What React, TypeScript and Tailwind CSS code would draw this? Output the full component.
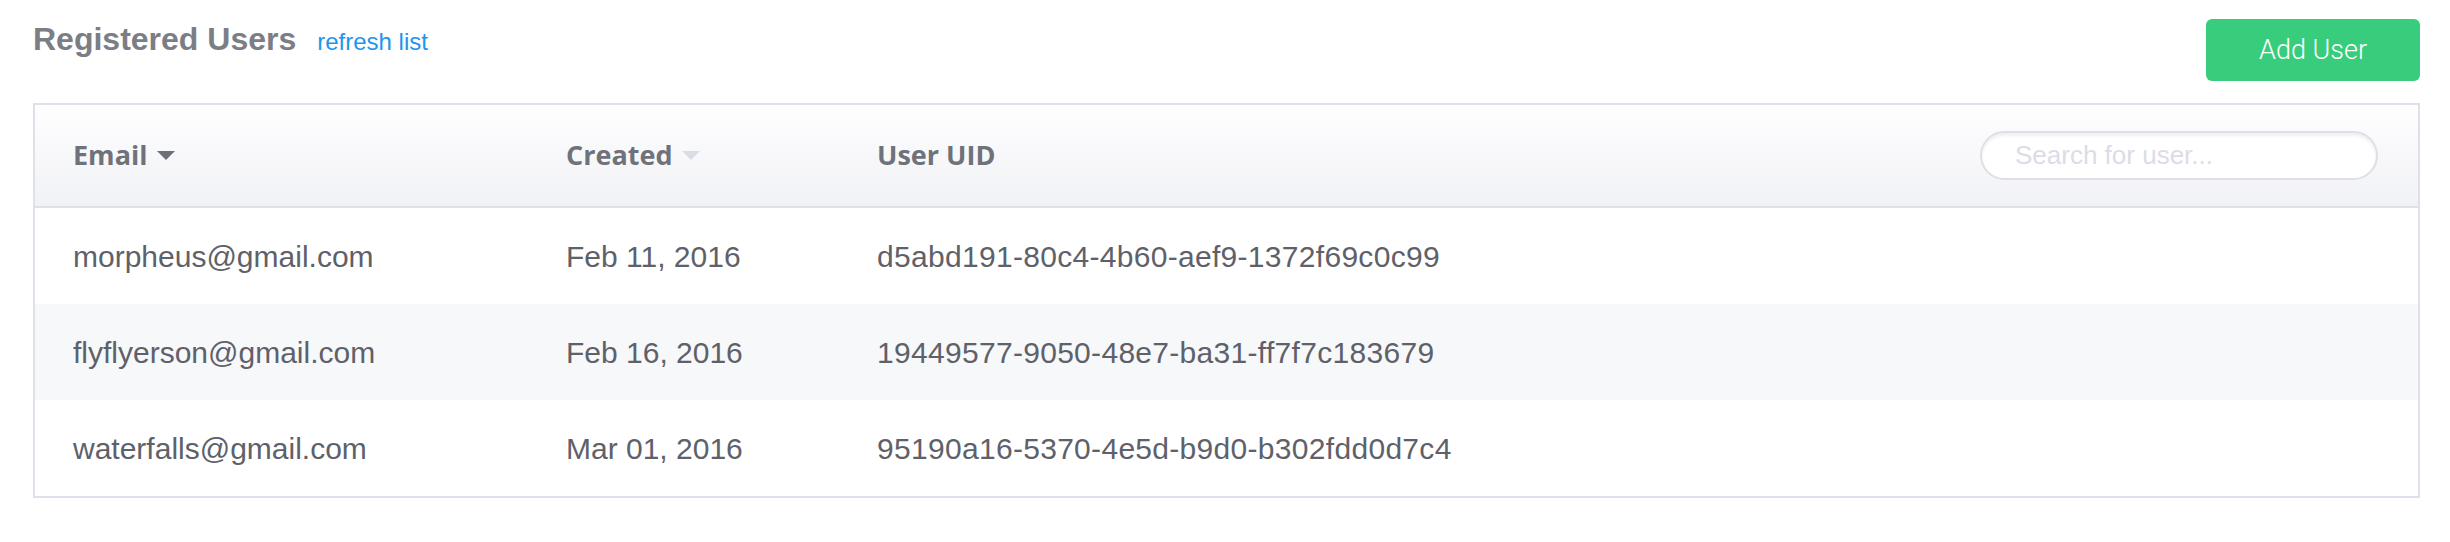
import React from 'react';

const users = [
  { email: 'morpheus@gmail.com', created: 'Feb 11, 2016', uid: 'd5abd191-80c4-4b60-aef9-1372f69c0c99' },
  { email: 'flyflyerson@gmail.com', created: 'Feb 16, 2016', uid: '19449577-9050-48e7-ba31-ff7f7c183679' },
  { email: 'waterfalls@gmail.com', created: 'Mar 01, 2016', uid: '95190a16-5370-4e5d-b9d0-b302fdd0d7c4' },
];

function SortCaret({ active }: { active?: boolean }) {
  return (
    <svg width="18" height="10" viewBox="0 0 18 10" className="ml-[10px]">
      <path d="M0 0 L18 0 L9 9 Z" fill={active ? '#6c6f77' : '#dcdce5'} />
    </svg>
  );
}

export default function App() {
  return (
    <div className="w-[2450px] h-[542px] bg-white pl-[33px] pr-[30px] pt-[19px] font-['Liberation_Sans',Arial,sans-serif]">
      {/* Top bar */}
      <div className="flex items-start justify-between">
        <div className="flex items-baseline gap-[21px]">
          <h1 className="text-[32px] leading-[40px] font-bold text-[#7b7e85]">Registered Users</h1>
          <a className="text-[24px] text-[#1e95ee] cursor-pointer">refresh list</a>
        </div>
        <button className="w-[214px] h-[62px] rounded-[6px] bg-[#37cd7c] text-white text-[27px] font-light font-['Roboto',sans-serif]">
          Add User
        </button>
      </div>

      {/* Table */}
      <div className="mt-[22px] border-2 border-[#e0e0ea]">
        {/* Header */}
        <div className="h-[103px] flex items-center bg-gradient-to-b from-[#fefefe] to-[#f1f2f6] border-b-2 border-[#e0e0ea] pl-[38px] pr-[40px] font-['Open_Sans',sans-serif] font-bold text-[27px] text-[#6f727a]">
          <div className="w-[493px] flex items-center">
            Email
            <SortCaret active />
          </div>
          <div className="w-[311px] flex items-center">
            Created
            <SortCaret />
          </div>
          <div className="flex-1">User UID</div>
          <input
            placeholder="Search for user..."
            className="w-[398px] h-[49px] rounded-full border-2 border-[#dfdee9] bg-white pl-[33px] pr-[20px] text-[26px] font-normal font-['Liberation_Sans',sans-serif] placeholder:text-[#dcdce7] shadow-[inset_0_3px_3px_rgba(0,0,0,0.06)] outline-none"
          />
        </div>

        {/* Rows */}
        {users.map((u, i) => (
          <div
            key={u.uid}
            className={`h-[96px] flex items-center pl-[38px] text-[30px] text-[#5e6169] ${i % 2 === 1 ? 'bg-[#f7f8fa]' : 'bg-white'}`}
          >
            <div className="w-[493px]">{u.email}</div>
            <div className="w-[311px]">{u.created}</div>
            <div className="tracking-[0.3px]">{u.uid}</div>
          </div>
        ))}
      </div>
    </div>
  );
}
